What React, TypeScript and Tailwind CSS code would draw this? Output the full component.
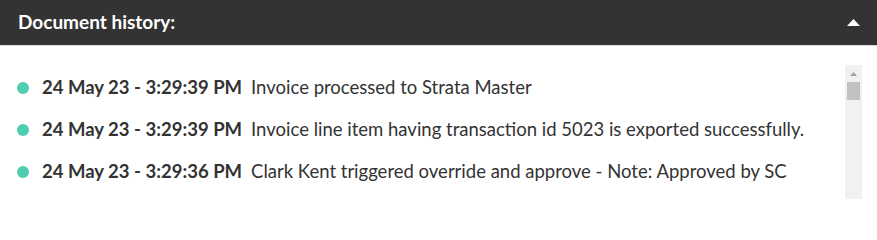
import React from "react";

const rows = [
  { date: "24 May 23 - 3:29:39 PM", msg: "Invoice processed to Strata Master" },
  { date: "24 May 23 - 3:29:39 PM", msg: "Invoice line item having transaction id 5023 is exported successfully." },
  { date: "24 May 23 - 3:29:36 PM", msg: "Clark Kent triggered override and approve - Note: Approved by SC" },
];

export default function App() {
  return (
    <div className="w-[877px] h-[200px] overflow-hidden bg-white" style={{ fontFamily: "Lato, 'Open Sans', sans-serif" }}>
      <div className="h-[45px] bg-[#333333] flex items-center justify-between pl-[18px] pr-[17px]">
        <span className="text-white font-bold text-[19px]">Document history:</span>
        <svg width="13" height="7" viewBox="0 0 13 7" className="mb-[1px]">
          <path d="M0 7 L6.5 0 L13 7 Z" fill="#ffffff" />
        </svg>
      </div>
      <div className="h-px bg-[#dddddd]" />
      <div className="flex pt-[19px] pr-[15px]">
        <div className="flex-1 flex flex-col pt-[2px]">
          {rows.map((r, i) => (
            <div key={i} className="h-[42px] flex items-center pl-[17px] text-[18.5px] text-[#333333] whitespace-nowrap">
              <span className="w-3 h-3 rounded-full bg-[#4ecdb1] shrink-0" />
              <span className="font-bold ml-[13px]">{r.date}</span>
              <span className="ml-[9px]">{r.msg}</span>
            </div>
          ))}
        </div>
        <div className="w-[17px] h-[134px] bg-[#f1f1f1] flex flex-col items-center shrink-0">
          <svg width="7" height="4" viewBox="0 0 7 4" className="mt-[7px]">
            <path d="M0 4 L3.5 0 L7 4 Z" fill="#a3a3a3" />
          </svg>
          <div className="w-[13px] h-[18px] bg-[#c1c1c1] mt-[6px]" />
        </div>
      </div>
    </div>
  );
}
